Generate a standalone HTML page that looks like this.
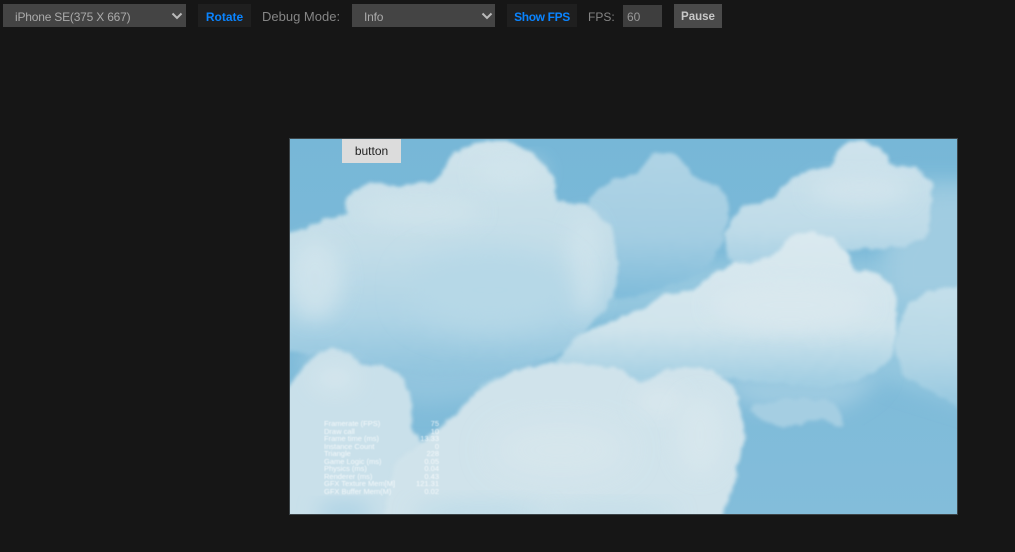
<!DOCTYPE html>
<html><head><meta charset="utf-8"><title>Simulator</title>
<style>
html,body{margin:0;padding:0;background:#161616;width:1015px;height:552px;overflow:hidden;font-family:"Liberation Sans",sans-serif}
.a{position:absolute;box-sizing:border-box;white-space:nowrap}
.sel{background:#444;height:23px;top:4px;color:#aaa;font-size:12px;letter-spacing:-.2px;line-height:26px;padding-left:12px}
.sel svg{position:absolute;top:8px}
.btn{top:4px;height:23px;background:#1f1f1f;color:#0a84ff;font-weight:bold;font-size:12px;line-height:26px;text-align:center}
.lbl{top:4px;height:23px;line-height:26px;color:#858585;font-size:13px}
#stats{left:0;top:0;width:439px;height:500px;filter:blur(.4px);color:#fff;font-size:7.5px;opacity:.82}
#stats div{position:absolute;height:8px;line-height:8px}
#stats .l{left:324px}
#stats .r{right:0}
</style></head>
<body>
<div class="a sel" style="left:3px;width:183px">iPhone SE(375 X 667)<svg style="left:168px" width="12" height="9" viewBox="0 0 12 9"><path d="M1.500 1.500L6 6l4.500-4.500" fill="none" stroke="#bbb" stroke-width="2"/></svg></div>
<div class="a btn" style="left:198px;width:53px">Rotate</div>
<div class="a lbl" style="left:262px">Debug Mode:</div>
<div class="a sel" style="left:352px;width:143px">Info<svg style="left:129px" width="12" height="9" viewBox="0 0 12 9"><path d="M1.500 1.500L6 6l4.500-4.500" fill="none" stroke="#bbb" stroke-width="2"/></svg></div>
<div class="a btn" style="left:507px;width:70px;letter-spacing:-.35px">Show FPS</div>
<div class="a lbl" style="left:588px;font-size:12px">FPS:</div>
<div class="a" style="left:623px;top:5px;width:39px;height:22px;background:#3e3e3e;color:#999;font-size:12px;line-height:24px;padding-left:4px">60</div>
<div class="a" style="left:674px;top:4px;width:48px;height:24px;background:#4a4a4a;color:#c8c8c8;font-weight:bold;font-size:11.5px;line-height:26px;text-align:center">Pause</div>

<div class="a" style="left:289px;top:138px;width:669px;height:377px;background:#3c4448"></div>
<svg class="a" style="left:0;top:0" width="1015" height="552" viewBox="0 0 1015 552">
<defs>
<clipPath id="c"><rect x="290" y="139" width="667" height="375"/></clipPath>
<linearGradient id="sky" x1="0" y1="0" x2="0" y2="1"><stop offset="0" stop-color="#77b7d7"/><stop offset="1" stop-color="#83bdda"/></linearGradient>
<linearGradient id="ga" gradientUnits="userSpaceOnUse" x1="0" y1="145" x2="0" y2="368"><stop offset="0" stop-color="#cfe3eb"/><stop offset=".45" stop-color="#c3dde8"/><stop offset=".78" stop-color="#add3e5"/><stop offset="1" stop-color="#92c5de"/></linearGradient>
<linearGradient id="gb" gradientUnits="userSpaceOnUse" x1="0" y1="150" x2="0" y2="295"><stop offset="0" stop-color="#b0d4e5"/><stop offset=".6" stop-color="#a3cde2"/><stop offset="1" stop-color="#80bcda"/></linearGradient>
<linearGradient id="gc" gradientUnits="userSpaceOnUse" x1="0" y1="140" x2="0" y2="270"><stop offset="0" stop-color="#cfe3ec"/><stop offset=".7" stop-color="#bedbe8"/><stop offset="1" stop-color="#a3cee3"/></linearGradient>
<linearGradient id="ge" gradientUnits="userSpaceOnUse" x1="0" y1="232" x2="0" y2="392"><stop offset="0" stop-color="#dae9ef"/><stop offset=".6" stop-color="#d0e4ec"/><stop offset=".82" stop-color="#b2d6e6"/><stop offset="1" stop-color="#98c9e0"/></linearGradient>
<linearGradient id="gd" gradientUnits="userSpaceOnUse" x1="0" y1="286" x2="0" y2="410"><stop offset="0" stop-color="#c4dfea"/><stop offset=".55" stop-color="#b5d7e6"/><stop offset="1" stop-color="#92c6df"/></linearGradient>
<filter id="f" x="-15%" y="-15%" width="130%" height="130%" color-interpolation-filters="sRGB">
<feGaussianBlur in="SourceGraphic" stdDeviation="4.500" result="b"/>
<feComponentTransfer in="b" result="t"><feFuncA type="linear" slope="7" intercept="-3"/></feComponentTransfer>
<feTurbulence type="fractalNoise" baseFrequency=".1" numOctaves="3" seed="4" result="n"/>
<feDisplacementMap in="t" in2="n" scale="7" xChannelSelector="R" yChannelSelector="G"/>
<feGaussianBlur stdDeviation="1.800"/>
</filter>
<filter id="s" x="-40%" y="-40%" width="180%" height="180%"><feGaussianBlur stdDeviation="16"/></filter>
<filter id="w" x="-40%" y="-40%" width="180%" height="180%"><feGaussianBlur stdDeviation="10"/></filter>
</defs>
<g clip-path="url(#c)">
<rect x="290" y="139" width="667" height="375" fill="url(#sky)"/>
<!-- lighter haze behind clouds -->
<path d="M270 320H760L900 385 980 410V180H900L880 260H600L270 300Z" fill="#94c7df" filter="url(#w)"/>
<path d="M925 195H980V300H890V250Z" fill="#a0cce1" filter="url(#w)"/>
<path d="M300 340H560V385L470 400 420 405 300 370Z" fill="#92c5de" filter="url(#w)"/>
<!-- right lower cloud -->
<path d="M905 306L913 302 927 291 957 286 975 290V420L957 406 930 390 905 378 893 345Z" fill="url(#gd)" filter="url(#f)"/>
<!-- mid back cloud -->
<path d="M593 192L613 179 640 172 650 155 665 152 683 159 695 179 710 181 728 196 729 219 720 249 703 272 660 290 620 300 590 280 580 220Z" fill="url(#gb)" filter="url(#f)"/>
<!-- large left cloud -->
<path d="M270 236L290 234 310 226 330 217 350 214 342 199 370 182 400 186 437 181 450 156 477 141 507 141 533 154 553 176 555 196 553 201 590 206 615 232 618 279 607 306 587 329 570 350 500 372 420 372 350 358 270 350Z" fill="url(#ga)" filter="url(#f)"/>
<g opacity=".7">
<ellipse cx="420" cy="212" rx="60" ry="14" fill="#d2e5ec" filter="url(#w)"/>
<ellipse cx="510" cy="172" rx="34" ry="14" fill="#d3e6ed" filter="url(#w)"/>
<ellipse cx="585" cy="265" rx="18" ry="50" fill="#d2e5ed" filter="url(#w)"/>
<ellipse cx="315" cy="280" rx="28" ry="40" fill="#d6e7ee" filter="url(#w)"/>
</g>
<ellipse cx="490" cy="290" rx="80" ry="40" fill="#b6d8e7" filter="url(#s)"/>
<!-- right upper cloud -->
<path d="M723 236L743 204 767 202 783 186 803 171 830 167 837 149 857 139 880 147 893 167 917 167 932 182 930 226 928 237 903 247 820 252 753 264 728 262Z" fill="url(#gc)" filter="url(#f)"/>
<ellipse cx="860" cy="190" rx="50" ry="16" fill="#d5e6ed" opacity=".7" filter="url(#w)"/>
<!-- sky veil under front cloud, wisps -->
<path d="M715 372L885 372 868 392 840 410 760 410 730 395Z" fill="#9ecbe1" filter="url(#w)"/>
<path d="M747 405L790 398 830 400 847 422 840 428 820 418 790 427 770 424 752 414Z" fill="#a5cee2" filter="url(#f)"/>
<!-- front right cloud -->
<path d="M557 362L573 339 600 325 637 312 663 294 690 292 710 276 733 262 753 262 777 254 790 236 810 231 833 237 852 259 850 271 877 272 897 292 897 326 892 359 863 379 820 388 720 378 640 385 560 400 500 400 470 385Z" fill="url(#ge)" filter="url(#f)"/>
<ellipse cx="790" cy="305" rx="80" ry="24" fill="#dce9ef" opacity=".7" filter="url(#w)"/>
<!-- bottom left cloud -->
<path d="M270 400L290 387 307 362 327 347 350 352 363 367 383 364 405 379 412 402 412 432 440 460 400 505 380 530H270Z" fill="#c9e0ea" filter="url(#f)"/>
<ellipse cx="335" cy="378" rx="24" ry="16" fill="#d5e6ed" opacity=".8" filter="url(#w)"/>
<ellipse cx="345" cy="512" rx="28" ry="9" fill="#a8d0e4" filter="url(#w)"/>
<!-- bottom big cloud -->
<path d="M450 419L480 389 517 370 557 362 620 368 640 385 667 369 707 367 737 389 745 436 733 489 717 530H382L395 462Z" fill="#d0e3eb" filter="url(#f)"/>
<ellipse cx="660" cy="402" rx="24" ry="14" fill="#dae8ee" opacity=".8" filter="url(#w)"/>
<ellipse cx="700" cy="435" rx="24" ry="40" fill="#d9e8ee" opacity=".7" filter="url(#w)"/>
<ellipse cx="560" cy="450" rx="70" ry="28" fill="#d8e7ed" opacity=".8" filter="url(#s)"/>
<ellipse cx="480" cy="512" rx="70" ry="12" fill="#bcdbe8" opacity=".8" filter="url(#w)"/>
<ellipse cx="610" cy="512" rx="70" ry="10" fill="#c3dee9" opacity=".8" filter="url(#w)"/>
</g>
</svg>

<div class="a" style="left:342px;top:139px;width:59px;height:24px;background:#dcdcdc;color:#222;font-size:12px;line-height:24px;text-align:center">button</div>

<div class="a" id="stats">
<div class="l" style="top:420px">Framerate (FPS)</div><div class="r" style="top:420px">75</div>
<div class="l" style="top:427.500px">Draw call</div><div class="r" style="top:427.500px">10</div>
<div class="l" style="top:435px">Frame time (ms)</div><div class="r" style="top:435px">13.33</div>
<div class="l" style="top:442.500px">Instance Count</div><div class="r" style="top:442.500px">0</div>
<div class="l" style="top:450px">Triangle</div><div class="r" style="top:450px">228</div>
<div class="l" style="top:457.500px">Game Logic (ms)</div><div class="r" style="top:457.500px">0.05</div>
<div class="l" style="top:465px">Physics (ms)</div><div class="r" style="top:465px">0.04</div>
<div class="l" style="top:472.500px">Renderer (ms)</div><div class="r" style="top:472.500px">0.43</div>
<div class="l" style="top:480px">GFX Texture Mem[M]</div><div class="r" style="top:480px">121.31</div>
<div class="l" style="top:487.500px">GFX Buffer Mem(M)</div><div class="r" style="top:487.500px">0.02</div>
</div>
</body></html>
